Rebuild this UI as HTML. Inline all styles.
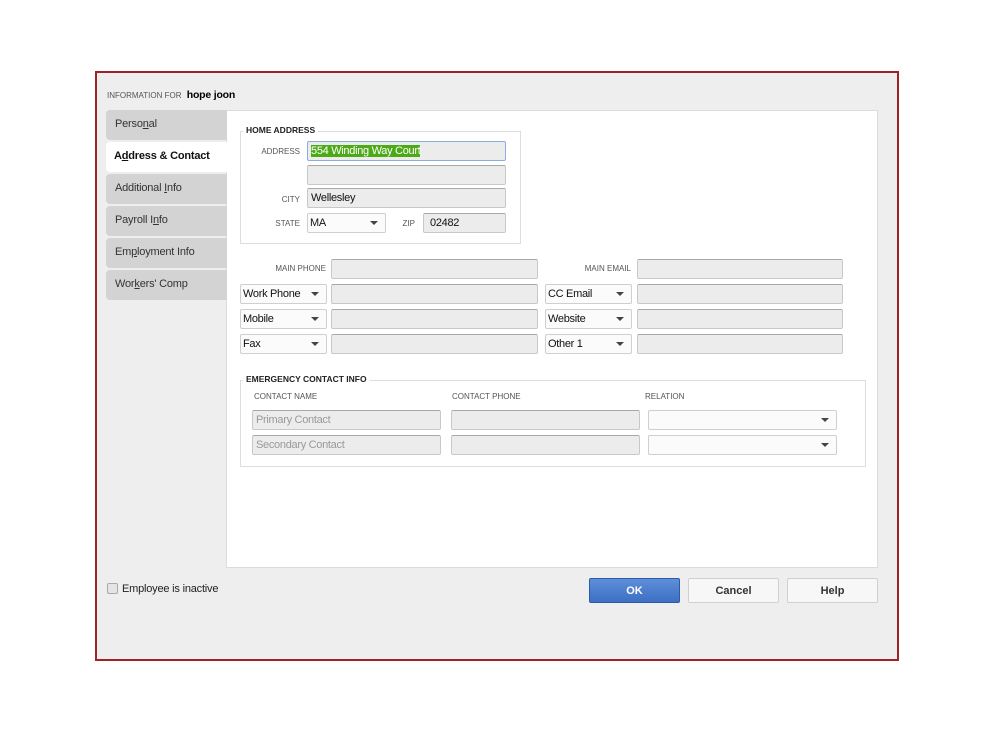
<!DOCTYPE html>
<html><head><style>
*{box-sizing:border-box;margin:0;padding:0}
body{width:999px;height:749px;background:#fff;position:relative;font-family:"Liberation Sans",Arial,sans-serif;overflow:hidden}
.a{position:absolute}
#frame{left:95px;top:71px;width:804px;height:590px;border:2px solid #9e2226;background:#eeeeee}
.tab{position:absolute;left:106px;width:121px;height:30px;background:#d3d3d3;border-radius:4px 0 0 4px;font-size:11px;letter-spacing:-0.2px;color:#333;padding:8px 0 0 9px}
.tab.on{background:#fff;color:#111;font-weight:bold;padding-left:8px}
.inp{position:absolute;height:20px;background:#ececec;border:1px solid #c8c8c8;border-top-color:#a8a8a8;border-radius:2px;font-size:11px;letter-spacing:-0.3px;padding:3px 3px;color:#111}
.sel{position:absolute;height:20px;background:#fbfbfb;border:1px solid #cfcfcf;border-radius:2px;font-size:11px;letter-spacing:-0.3px;padding:3px 2px;color:#111}
.sel:after{content:"";position:absolute;right:7px;top:7px;border:4px solid transparent;border-top:4px solid #444;border-bottom:0}
.lbl{position:absolute;font-size:8px;color:#555;text-align:right}
.fs{position:absolute;border:1px solid #ddd}
.lg{position:absolute;font-size:8.5px;font-weight:bold;color:#222;background:#fff;padding:0 3px}
.btn{position:absolute;top:578px;width:91px;height:25px;border:1px solid #d0d0d0;border-radius:2px;background:#f7f7f7;font-size:11px;font-weight:bold;color:#333;text-align:center;line-height:24px}
</style></head><body>
<div class="a" id="frame"></div>
<div class="a" style="left:107px;top:89px;font-size:8px;color:#555">INFORMATION FOR <b style="font-size:10.5px;color:#000;margin-left:3px;letter-spacing:-0.2px">hope joon</b></div>
<div class="a" style="left:226px;top:110px;width:652px;height:458px;background:#fff;border:1px solid #dcdcdc"></div>
<div class="tab" style="top:110px">Perso<u>n</u>al</div>
<div class="tab on" style="top:142px">A<u>d</u>dress &amp; Contact</div>
<div class="tab" style="top:174px">Additional <u>I</u>nfo</div>
<div class="tab" style="top:206px">Payroll I<u>n</u>fo</div>
<div class="tab" style="top:238px">Em<u>p</u>loyment Info</div>
<div class="tab" style="top:270px">Wor<u>k</u>ers' Comp</div>

<div class="fs" style="left:240px;top:131px;width:281px;height:113px"></div>
<div class="lg" style="left:243px;top:125px">HOME ADDRESS</div>
<div class="lbl" style="left:240px;top:147px;width:60px">ADDRESS</div>
<div class="inp" style="left:307px;top:141px;width:199px;border-color:#8aaede"><span style="background:#4caa16;color:#fff">554 Winding Way Court</span></div>
<div class="inp" style="left:307px;top:165px;width:199px"></div>
<div class="lbl" style="left:240px;top:195px;width:60px">CITY</div>
<div class="inp" style="left:307px;top:188px;width:199px">Wellesley</div>
<div class="lbl" style="left:240px;top:219px;width:60px">STATE</div>
<div class="sel" style="left:307px;top:213px;width:79px">MA</div>
<div class="lbl" style="left:390px;top:219px;width:25px">ZIP</div>
<div class="inp" style="left:423px;top:213px;width:83px;padding-left:6px">02482</div>

<div class="lbl" style="left:240px;top:264px;width:86px">MAIN PHONE</div>
<div class="inp" style="left:331px;top:259px;width:207px"></div>
<div class="lbl" style="left:545px;top:264px;width:86px">MAIN EMAIL</div>
<div class="inp" style="left:637px;top:259px;width:206px"></div>

<div class="sel" style="left:240px;top:284px;width:87px">Work Phone</div>
<div class="inp" style="left:331px;top:284px;width:207px"></div>
<div class="sel" style="left:545px;top:284px;width:87px">CC Email</div>
<div class="inp" style="left:637px;top:284px;width:206px"></div>
<div class="sel" style="left:240px;top:309px;width:87px">Mobile</div>
<div class="inp" style="left:331px;top:309px;width:207px"></div>
<div class="sel" style="left:545px;top:309px;width:87px">Website</div>
<div class="inp" style="left:637px;top:309px;width:206px"></div>
<div class="sel" style="left:240px;top:334px;width:87px">Fax</div>
<div class="inp" style="left:331px;top:334px;width:207px"></div>
<div class="sel" style="left:545px;top:334px;width:87px">Other 1</div>
<div class="inp" style="left:637px;top:334px;width:206px"></div>

<div class="fs" style="left:240px;top:380px;width:626px;height:87px"></div>
<div class="lg" style="left:243px;top:374px">EMERGENCY CONTACT INFO</div>
<div class="lbl" style="left:254px;top:392px;text-align:left">CONTACT NAME</div>
<div class="lbl" style="left:452px;top:392px;text-align:left">CONTACT PHONE</div>
<div class="lbl" style="left:645px;top:392px;text-align:left">RELATION</div>
<div class="inp" style="left:252px;top:410px;width:189px;color:#999">Primary Contact</div>
<div class="inp" style="left:451px;top:410px;width:189px"></div>
<div class="sel" style="left:648px;top:410px;width:189px"></div>
<div class="inp" style="left:252px;top:435px;width:189px;color:#999">Secondary Contact</div>
<div class="inp" style="left:451px;top:435px;width:189px"></div>
<div class="sel" style="left:648px;top:435px;width:189px"></div>

<div class="a" style="left:107px;top:583px;width:11px;height:11px;border:1px solid #aaa;border-radius:2px;background:#e4e4e4"></div>
<div class="a" style="left:122px;top:583px;font-size:11px;letter-spacing:-0.2px;color:#222">Employee is inactive</div>
<div class="btn" style="left:589px;background:linear-gradient(#5e8fd8,#3d6fc4);border-color:#2d5aa8;color:#fff">OK</div>
<div class="btn" style="left:688px">Cancel</div>
<div class="btn" style="left:787px">Help</div>
</body></html>
